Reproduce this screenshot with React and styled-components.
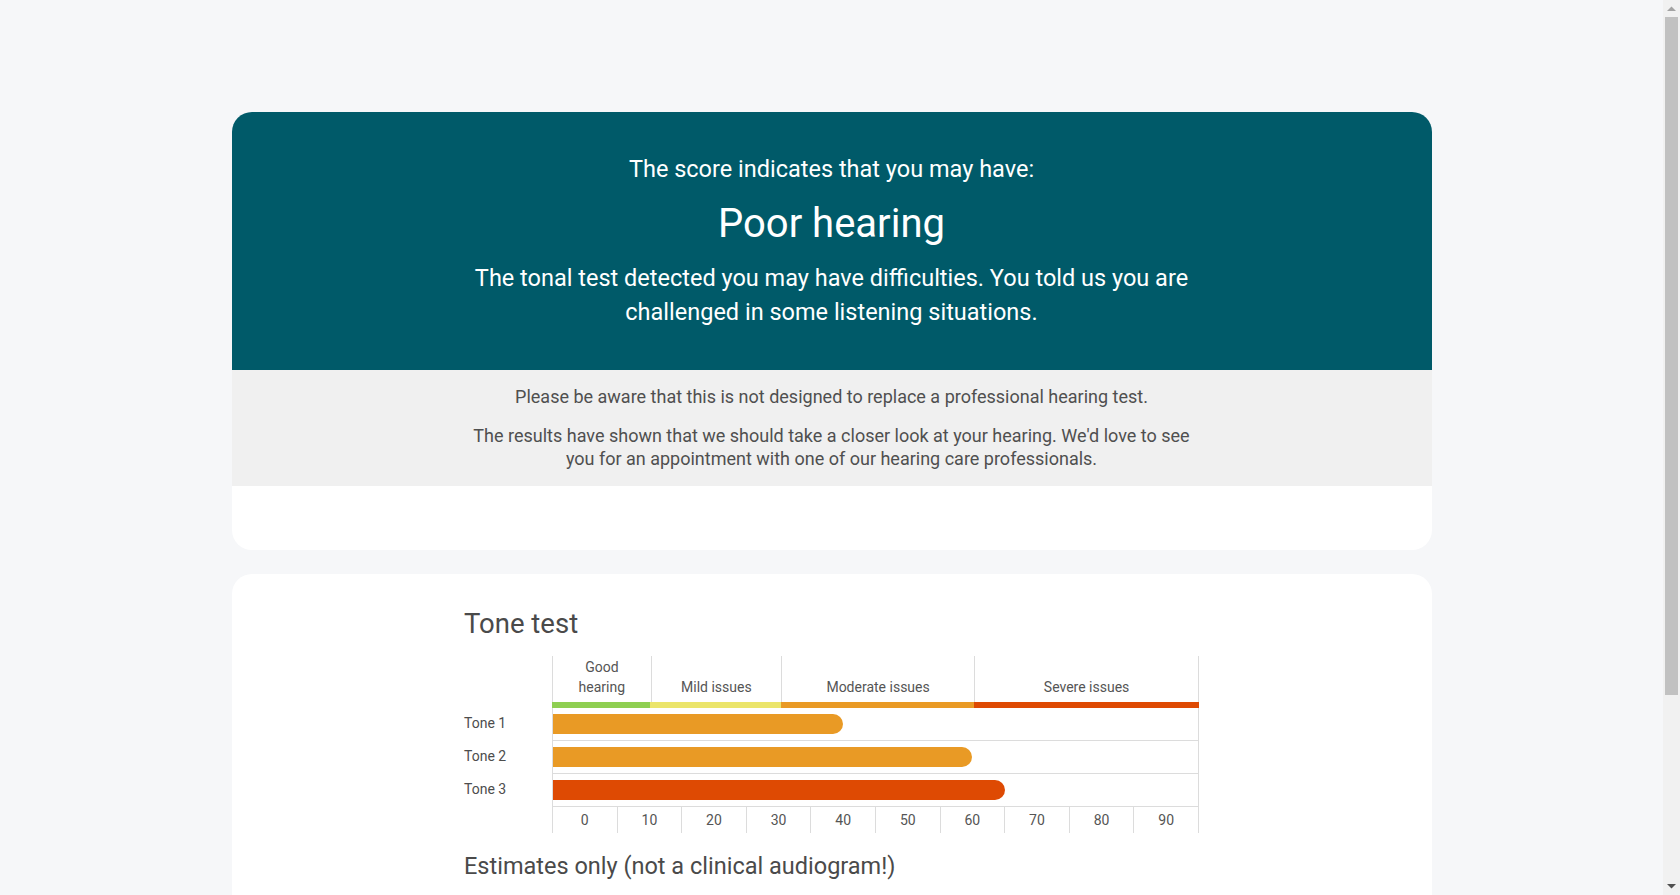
import React from "react";
import styled, { createGlobalStyle } from "styled-components";

const GlobalStyle = createGlobalStyle`
  html, body { margin: 0; padding: 0; height: 100%; overflow: hidden; }
  body {
    background: #f6f7f9;
    font-family: Roboto, "Liberation Sans", Arial, sans-serif;
    color: #4d4d4d;
  }
`;

const Shell = styled.div`
  display: flex;
  height: 100vh;
  background: #f6f7f9;
`;

const Scroller = styled.div`
  flex: 1;
  min-width: 0;
  overflow-y: auto;
  scrollbar-width: none;
  &::-webkit-scrollbar { display: none; }
`;

const Rail = styled.div`
  width: 17px;
  flex: none;
  display: flex;
  flex-direction: column;
  background: #f1f1f1;
`;

const RailButton = styled.div`
  height: 17px;
  flex: none;
  display: flex;
  align-items: center;
  justify-content: center;
`;

const RailTrack = styled.div`
  flex: 1;
  display: flex;
  flex-direction: column;
  padding: 0 2px;
`;

const Thumb = styled.div`
  height: 678px;
  background: #c1c1c1;
`;

const Page = styled.main`
  display: flex;
  flex-direction: column;
  align-items: center;
  gap: 24px;
  padding: 112px 0 28px;
`;

const Card = styled.section`
  width: 1200px;
  background: #ffffff;
  border-radius: 20px;
  overflow: hidden;
  padding-bottom: ${(p) => p.$padBottom || 0}px;
  box-sizing: border-box;
`;

const Hero = styled.div`
  background: #005a69;
  color: #ffffff;
  padding: 41px 0 41px;
  text-align: center;
`;

const Column = styled.div`
  width: ${(p) => p.$width || 730}px;
  margin: 0 auto;
`;

const Lead = styled.p`
  margin: 0;
  font-size: 23.5px;
  line-height: 33.4px;
`;

const Verdict = styled.h1`
  margin: 14px 0 14px;
  font-size: 40px;
  font-weight: 400;
  line-height: 48px;
`;

const Notice = styled.div`
  background: #f0f0f0;
  padding: 15px 0 16px;
  text-align: center;
  color: #4f4f4f;
`;

const NoticeText = styled.p`
  margin: 0;
  font-size: 18px;
  line-height: 23px;
  & + & { margin-top: 16px; }
`;

const ChartCard = styled.div`
  padding-top: 33px;
`;

const SectionTitle = styled.h2`
  margin: 0 0 16px;
  font-size: 27.5px;
  font-weight: 400;
  line-height: 33px;
  color: #4a4a4a;
`;

const SubTitle = styled.h3`
  margin: 19px 0 16px;
  font-size: 23.5px;
  font-weight: 400;
  line-height: 28.8px;
  color: #4a4a4a;
`;

const Chart = styled.div`
  display: grid;
  grid-template-columns: 88px 1fr;
  font-size: 14px;
  color: #555555;
`;

const RowLabel = styled.div`
  display: flex;
  align-items: center;
  padding-bottom: 3px;
  font-size: 14px;
  line-height: 20px;
  color: #4d4d4d;
`;

const Track = styled.div`
  border-left: 1px solid #dcdcdc;
  border-right: 1px solid #dcdcdc;
  border-bottom: ${(p) => (p.$ruled ? "1px solid #dcdcdc" : "none")};
  padding: ${(p) => (p.$ruled ? "6px 0" : "0")};
`;

const Segments = styled.div`
  display: flex;
  height: 46px;
`;

const Segment = styled.div`
  width: ${(p) => p.$w}%;
  box-sizing: border-box;
  display: flex;
  align-items: flex-end;
  justify-content: center;
  text-align: center;
  padding: 0 8px 5px;
  line-height: 20px;
  border-left: ${(p) => (p.$first ? "none" : "1px solid #dcdcdc")};
`;

const Stripe = styled.div`
  display: flex;
  height: 6px;
  margin-left: -1px;
  margin-right: -1px;
`;

const StripePart = styled.div`
  width: ${(p) => p.$w}%;
  background: ${(p) => p.$color};
`;

const Bar = styled.div`
  height: 20px;
  background: ${(p) => p.$color};
  border-radius: 0 10px 10px 0;
`;

const Ticks = styled.div`
  display: flex;
  height: 26px;
`;

const Tick = styled.div`
  flex: 1;
  text-align: center;
  line-height: 26px;
  font-size: 14px;
  color: #555555;
  border-left: ${(p) => (p.$first ? "none" : "1px solid #dcdcdc")};
`;

const bands = [
  { label: "Good hearing", w: 15.15, color: "#8fcf52" },
  { label: "Mild issues", w: 20.2, color: "#ebe56b" },
  { label: "Moderate issues", w: 29.95, color: "#e99a25" },
  { label: "Severe issues", w: 34.7, color: "#de4a03" },
];

const colorFor = (v) => (v > 65 ? "#de4a03" : v > 35 ? "#e99a25" : v > 15 ? "#ebe56b" : "#8fcf52");

function BandChart({ rows }) {
  return (
    <Chart>
      <div />
      <Track>
        <Segments>
          {bands.map((b, i) => (
            <Segment key={b.label} $w={b.w} $first={i === 0}>
              {b.label}
            </Segment>
          ))}
        </Segments>
        <Stripe>
          {bands.map((b) => (
            <StripePart key={b.label} $w={b.w} $color={b.color} />
          ))}
        </Stripe>
      </Track>
      {rows.map((r) => (
        <React.Fragment key={r.label}>
          <RowLabel>{r.label}</RowLabel>
          <Track $ruled>
            <Bar $color={colorFor(r.value)} style={{ width: `${r.value}%` }} />
          </Track>
        </React.Fragment>
      ))}
      <div />
      <Track>
        <Ticks>
          {[0, 10, 20, 30, 40, 50, 60, 70, 80, 90].map((t, i) => (
            <Tick key={t} $first={i === 0}>
              {t}
            </Tick>
          ))}
        </Ticks>
      </Track>
    </Chart>
  );
}

function ScrollRail() {
  return (
    <Rail aria-hidden="true">
      <RailButton>
        <svg width="9" height="5" viewBox="0 0 9 5">
          <polygon points="0,5 9,5 4.5,0.5" fill="#a3a3a3" />
        </svg>
      </RailButton>
      <RailTrack>
        <Thumb />
      </RailTrack>
      <RailButton>
        <svg width="9" height="5" viewBox="0 0 9 5">
          <polygon points="0,0 9,0 4.5,4.5" fill="#505050" />
        </svg>
      </RailButton>
    </Rail>
  );
}

export default function App() {
  return (
    <>
      <GlobalStyle />
      <Shell>
        <Scroller>
          <Page>
            <Card $padBottom={64}>
              <Hero>
                <Column>
                  <Lead>The score indicates that you may have:</Lead>
                  <Verdict>Poor hearing</Verdict>
                  <Lead>
                    The tonal test detected you may have difficulties. You told us you are challenged in some
                    listening situations.
                  </Lead>
                </Column>
              </Hero>
              <Notice>
                <Column>
                  <NoticeText>
                    Please be aware that this is not designed to replace a professional hearing test.
                  </NoticeText>
                  <NoticeText>
                    The results have shown that we should take a closer look at your hearing. We'd love to see you
                    for an appointment with one of our hearing care professionals.
                  </NoticeText>
                </Column>
              </Notice>
            </Card>
            <Card $padBottom={32}>
              <ChartCard>
                <Column $width={735}>
                  <SectionTitle>Tone test</SectionTitle>
                  <BandChart
                    rows={[
                      { label: "Tone 1", value: 45 },
                      { label: "Tone 2", value: 65 },
                      { label: "Tone 3", value: 70 },
                    ]}
                  />
                  <SubTitle>Estimates only (not a clinical audiogram!)</SubTitle>
                  <BandChart
                    rows={[
                      { label: "Low", value: 40 },
                      { label: "Mid", value: 60 },
                      { label: "High", value: 70 },
                    ]}
                  />
                </Column>
              </ChartCard>
            </Card>
          </Page>
        </Scroller>
        <ScrollRail />
      </Shell>
    </>
  );
}
